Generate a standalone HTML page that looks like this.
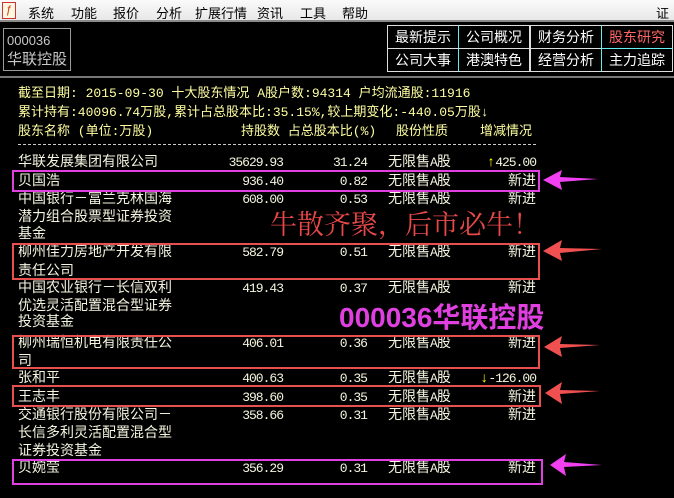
<!DOCTYPE html>
<html><head><meta charset="utf-8"><style>
*{margin:0;padding:0;box-sizing:border-box}
body{width:674px;height:498px;background:#000;position:relative;overflow:hidden;font-family:"Liberation Sans","Noto Sans CJK SC","WenQuanYi Zen Hei",sans-serif;}
.a{position:absolute;white-space:nowrap}
#menu{position:absolute;left:0;top:0;width:674px;height:22px;background:linear-gradient(#fafafa,#e8e8e8);border-bottom:2px solid #8a8a8a;font-size:13px;color:#000}
#menu span{position:absolute;top:3px}
.code{left:3px;top:28px;width:68px;height:43px;border:1px solid #9a9a9a;color:#c8c8c8;font-size:13px;padding:2px 0 0 3px;line-height:19px}
.tab{position:absolute;width:72px;height:24px;border:1px solid #ddd;color:#fff;font-size:14px;text-align:center;line-height:22px}
.y{color:#ffffa0;font-size:13px;font-family:"Liberation Mono","Noto Sans CJK SC",monospace}
.row{position:absolute;left:0;width:674px;height:18px;font-size:14px;line-height:18px;color:#f4f4e0;font-family:"Liberation Mono","Noto Sans CJK SC",monospace}
.row span{position:absolute;top:0;white-space:nowrap}
.n{left:18px}
.h{right:391px;letter-spacing:-1px;font-size:13px}
.p{right:307px;letter-spacing:-1px;font-size:13px}
.q{left:388px}
.c{right:138px}
.m{letter-spacing:-1px;font-size:13px}
.box{position:absolute;border:2px solid}
</style></head><body>
<div id="menu">
<div class="a" style="left:2px;top:2px;width:14px;height:17px;border:1px solid #c33;background:#fff8e0;color:#c30;font-size:11px;text-align:center;line-height:15px">ƒ</div>
<span style="left:28px">系统</span><span style="left:71px">功能</span><span style="left:113px">报价</span><span style="left:156px">分析</span><span style="left:195px">扩展行情</span><span style="left:257px">资讯</span><span style="left:300px">工具</span><span style="left:342px">帮助</span><span style="left:656px">证券</span>
</div>
<div class="a code">000036<br><span style="font-size:15px">华联控股</span></div>
<div class="tab" style="left:387px;top:25px">最新提示</div>
<div class="tab" style="left:458px;top:25px;border-left-color:#6ee">公司概况</div>
<div class="tab" style="left:530px;top:25px">财务分析</div>
<div class="tab" style="left:601px;top:25px;border-left-color:#6ee;color:#f66">股东研究</div>
<div class="tab" style="left:387px;top:48px">公司大事</div>
<div class="tab" style="left:458px;top:48px;border-left-color:#6ee">港澳特色</div>
<div class="tab" style="left:530px;top:48px">经营分析</div>
<div class="tab" style="left:601px;top:48px;border-left-color:#6ee;border-top-color:#6ee">主力追踪</div>
<div class="a" style="left:0;top:76px;width:674px;height:2px;background:#777"></div>
<div class="a y" style="left:18px;top:82px">截至日期: 2015-09-30 十大股东情况 A股户数:94314 户均流通股:11916</div>
<div class="a y" style="left:18px;top:101px">累计持有:40096.74万股,累计占总股本比:35.15%,较上期变化:-440.05万股↓</div>
<div class="a y" style="left:18px;top:120px">股东名称 (单位:万股)</div>
<div class="a y" style="left:241px;top:120px">持股数 占总股本比(%)</div>
<div class="a y" style="left:396px;top:120px">股份性质</div>
<div class="a y" style="left:480px;top:120px">增减情况</div>
<div class="a" style="left:18px;top:144px;width:518px;border-top:1px dashed #ccc"></div>

<div class="row" style="top:154px"><span class="n">华联发展集团有限公司</span><span class="h">35629.93</span><span class="p">31.24</span><span class="q">无限售<span class="m" style="position:static">A</span>股</span><span class="c"><span style="position:static;color:#ff0">↑</span><span class="m" style="position:static">425.00</span></span></div>
<div class="row" style="top:173px"><span class="n">贝国浩</span><span class="h">936.40</span><span class="p">0.82</span><span class="q">无限售<span class="m" style="position:static">A</span>股</span><span class="c">新进</span></div>
<div class="row" style="top:191px"><span class="n">中国银行－富兰克林国海</span><span class="h">608.00</span><span class="p">0.53</span><span class="q">无限售<span class="m" style="position:static">A</span>股</span><span class="c">新进</span></div>
<div class="row" style="top:209px"><span class="n">潜力组合股票型证券投资</span></div>
<div class="row" style="top:226px"><span class="n">基金</span></div>
<div class="row" style="top:244px"><span class="n">柳州佳力房地产开发有限</span><span class="h">582.79</span><span class="p">0.51</span><span class="q">无限售<span class="m" style="position:static">A</span>股</span><span class="c">新进</span></div>
<div class="row" style="top:263px"><span class="n">责任公司</span></div>
<div class="row" style="top:280px"><span class="n">中国农业银行－长信双利</span><span class="h">419.43</span><span class="p">0.37</span><span class="q">无限售<span class="m" style="position:static">A</span>股</span><span class="c">新进</span></div>
<div class="row" style="top:298px"><span class="n">优选灵活配置混合型证券</span></div>
<div class="row" style="top:314px"><span class="n">投资基金</span></div>
<div class="row" style="top:335px"><span class="n">柳州瑞恒机电有限责任公</span><span class="h">406.01</span><span class="p">0.36</span><span class="q">无限售<span class="m" style="position:static">A</span>股</span><span class="c">新进</span></div>
<div class="row" style="top:353px"><span class="n">司</span></div>
<div class="row" style="top:370px"><span class="n">张和平</span><span class="h">400.63</span><span class="p">0.35</span><span class="q">无限售<span class="m" style="position:static">A</span>股</span><span class="c"><span style="position:static;color:#ff0">↓</span><span class="m" style="position:static">-126.00</span></span></div>
<div class="row" style="top:389px"><span class="n">王志丰</span><span class="h">398.60</span><span class="p">0.35</span><span class="q">无限售<span class="m" style="position:static">A</span>股</span><span class="c">新进</span></div>
<div class="row" style="top:407px"><span class="n">交通银行股份有限公司－</span><span class="h">358.66</span><span class="p">0.31</span><span class="q">无限售<span class="m" style="position:static">A</span>股</span><span class="c">新进</span></div>
<div class="row" style="top:425px"><span class="n">长信多利灵活配置混合型</span></div>
<div class="row" style="top:443px"><span class="n">证券投资基金</span></div>
<div class="row" style="top:460px"><span class="n">贝婉莹</span><span class="h">356.29</span><span class="p">0.31</span><span class="q">无限售<span class="m" style="position:static">A</span>股</span><span class="c">新进</span></div>

<div class="box" style="left:12px;top:170px;width:528px;height:22px;border-color:#e040e0"></div>
<div class="box" style="left:12px;top:243px;width:528px;height:37px;border-color:#e85050"></div>
<div class="box" style="left:12px;top:335px;width:528px;height:34px;border-color:#e85050"></div>
<div class="box" style="left:12px;top:385px;width:529px;height:22px;border-color:#e85050"></div>
<div class="box" style="left:12px;top:459px;width:531px;height:26px;border-color:#e040e0"></div>

<svg class="a" style="left:540px;top:160px" width="70" height="330">
<polygon points="3,20 22,10 20,17 58,19 20,22 22,30" fill="#f040f0"/>
<polygon points="3,91 22,80 20,88 62,89 20,93 22,101" fill="#f05050"/>
<polygon points="4,187 22,176 20,184 60,185 20,188 22,197" fill="#f05050"/>
<polygon points="5,233 22,222 20,230 60,231 20,234 22,244" fill="#f05050"/>
<polygon points="10,305 26,294 24,302 62,305 24,307 26,316" fill="#f040f0"/>
</svg>
<div class="a" style="left:270px;top:203px;font-size:27px;color:#e84848;font-family:'Noto Serif CJK SC',serif">牛散齐聚，后市必牛！</div>
<div class="a" style="left:339px;top:296px;font-size:28px;color:#e040e0;font-weight:bold">000036华联控股</div>
</body></html>
